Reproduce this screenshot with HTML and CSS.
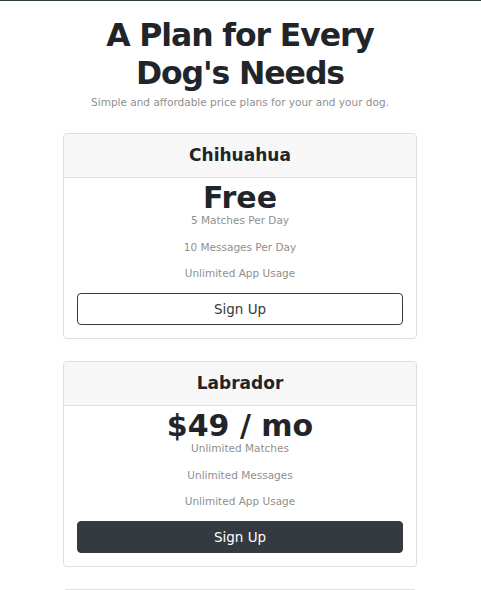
FILE: index.html
```html
<!DOCTYPE html>
<html lang="en">
<head>
<meta charset="utf-8">
<title>Pricing</title>
<link rel="stylesheet" href="styles.css">
</head>
<body>
<section class="pricing">
  <h2 class="title">A Plan for Every Dog's Needs</h2>
  <p class="subtitle">Simple and affordable price plans for your and your dog.</p>

  <div class="card">
    <div class="card-header">Chihuahua</div>
    <div class="card-body">
      <div class="price">Free</div>
      <p class="feature">5 Matches Per Day</p>
      <p class="feature">10 Messages Per Day</p>
      <p class="feature">Unlimited App Usage</p>
      <button class="btn btn-outline">Sign Up</button>
    </div>
  </div>

  <div class="card">
    <div class="card-header">Labrador</div>
    <div class="card-body">
      <div class="price">$49 / mo</div>
      <p class="feature">Unlimited Matches</p>
      <p class="feature">Unlimited Messages</p>
      <p class="feature">Unlimited App Usage</p>
      <button class="btn btn-dark">Sign Up</button>
    </div>
  </div>

  <div class="card">
    <div class="card-header">Mastiff</div>
    <div class="card-body">
      <div class="price">$99 / mo</div>
      <p class="feature">Priority Listing</p>
      <p class="feature">Unlimited Matches</p>
      <p class="feature">Unlimited Messages</p>
      <p class="feature">Unlimited App Usage</p>
      <button class="btn btn-dark">Sign Up</button>
    </div>
  </div>
</section>
</body>
</html>
```

FILE: styles.css
```css
html, body {
  margin: 0;
  padding: 0;
  background: #fff;
}
body {
  border-top: 1px solid #2b3a3e;
  font-family: "DejaVu Sans", sans-serif;
  color: #212529;
}
.pricing {
  text-align: center;
  padding: 0 64px 0 63px;
}
.title {
  font-family: "DejaVu Sans", sans-serif;
  font-weight: 700;
  font-size: 31.5px;
  letter-spacing: -1.1px;
  line-height: 38px;
  margin: 15px auto 0;
  width: 300px;
}
.subtitle {
  font-size: 10.5px;
  line-height: 16px;
  color: #8f8f8f;
  margin: 2px 0 23px;
}
.card {
  border: 1px solid #dfdfdf;
  border-radius: 4px;
  margin-bottom: 22px;
  overflow: hidden;
}
.card-header {
  background: #f7f7f7;
  border-bottom: 1px solid #dfdfdf;
  height: 43px;
  line-height: 43px;
  font-size: 17px;
  font-weight: 700;
  color: #212529;
}
.card-body {
  padding: 0 13px 13px;
}
.price {
  font-size: 30px;
  font-weight: 700;
  line-height: 34px;
  padding-top: 3px;
  color: #212529;
}
.feature {
  font-size: 10.5px;
  line-height: 16px;
  color: #8f8f8f;
  margin: 0 0 10.5px;
}
.feature:first-of-type {
  margin-top: -3px;
}
.btn {
  display: block;
  width: 100%;
  height: 32px;
  margin-top: 12px;
  border-radius: 4px;
  font-family: "DejaVu Sans", sans-serif;
  font-size: 13.5px;
  border: 1px solid #343a40;
}
.btn-outline {
  background: #fff;
  color: #343a40;
}
.btn-dark {
  background: #343a40;
  color: #fff;
}
```
